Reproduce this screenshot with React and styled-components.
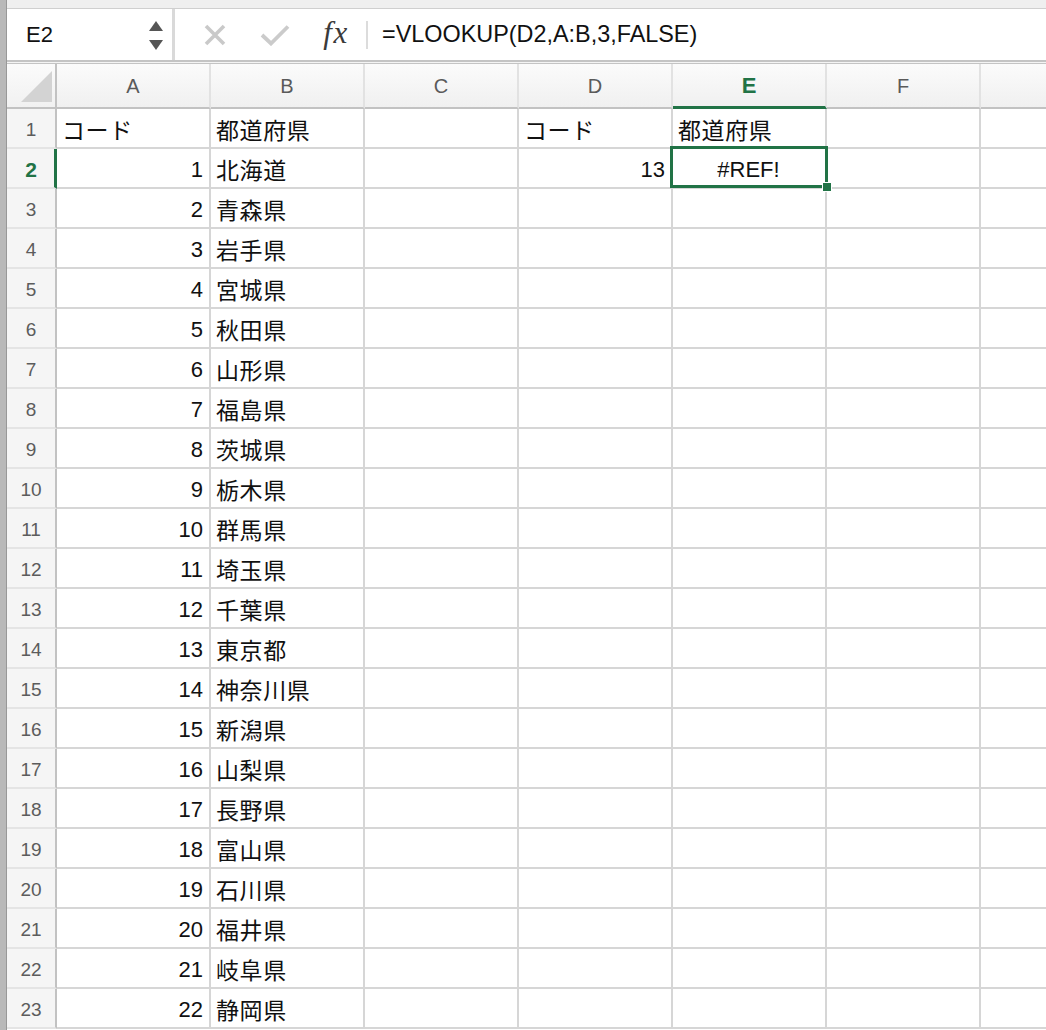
import React from "react";
import styled, { createGlobalStyle } from "styled-components";

const GlobalStyle = createGlobalStyle`
  html, body { margin: 0; padding: 0; background: #ffffff; overflow: hidden; }
  body { width: 1046px; height: 1030px; font-family: "Liberation Sans", "Noto Sans CJK JP", sans-serif; }
  * { box-sizing: border-box; }
`;

const GREEN = "#217346";
const GRID = "#d6d6d6";
const COL_W = 154;
const COLS = ["A", "B", "C", "D", "E", "F", "G"];
const VISIBLE_LABELS = ["A", "B", "C", "D", "E", "F"];

const Window = styled.div`
  display: flex;
  width: 1046px;
  height: 1030px;
  overflow: hidden;
`;

const LeftStrip = styled.div`
  flex: 0 0 7px;
  background: #b9b9b9;
  border-right: 1px solid #989898;
`;

const Main = styled.div`
  flex: 1 1 auto;
  display: flex;
  flex-direction: column;
  min-width: 0;
`;

const TopBand = styled.div`
  flex: 0 0 9px;
  background: #efefef;
  border-bottom: 1px solid #cfcfcf;
`;

const FormulaBar = styled.div`
  flex: 0 0 51px;
  display: flex;
  align-items: stretch;
  background: #ffffff;
`;

const NameBox = styled.div`
  flex: 0 0 168px;
  display: flex;
  align-items: center;
  justify-content: space-between;
  padding: 0 9px 0 19px;
  border-right: 3px solid #d9d9d9;
  font-size: 22px;
  color: #111;
`;

const Spinner = styled.div`
  display: flex;
  flex-direction: column;
  gap: 9px;
  margin-top: 1px;
`;

const Tools = styled.div`
  display: flex;
  align-items: center;
  padding-left: 28px;
`;

const ToolIcon = styled.div`
  width: ${(p) => p.$w}px;
  display: flex;
  align-items: center;
  justify-content: center;
  margin-right: ${(p) => p.$mr || 0}px;
`;

const Fx = styled.span`
  font-family: "Liberation Serif", "DejaVu Serif", serif;
  font-style: italic;
  font-size: 31px;
  color: #3a3a3a;
  letter-spacing: 1.5px;
  margin-top: -3px;
`;

const VDivider = styled.div`
  width: 2px;
  height: 28px;
  background: #dcdcdc;
  margin: 0 14px 0 14px;
`;

const FormulaText = styled.div`
  display: flex;
  align-items: center;
  font-size: 23.4px;
  color: #111;
  margin-top: -1px;
`;

const BarSeparator = styled.div`
  flex: 0 0 4px;
  border-top: 2px solid #c4c4c4;
  border-bottom: 1px solid #c4c4c4;
  background: #f4f4f4;
`;

const Sheet = styled.div`
  display: grid;
  grid-template-columns: 50px repeat(${COLS.length}, ${COL_W}px);
  grid-auto-rows: 40px;
  grid-template-rows: 45px;
`;

const Corner = styled.div`
  background: linear-gradient(#fbfbfb, #f1f1f1);
  border-right: 2px solid #c2c2c2;
  border-bottom: 2px solid #c2c2c2;
  display: flex;
  align-items: flex-end;
  justify-content: flex-end;
  padding: 0 3px 5px 0;
`;

const ColHead = styled.div`
  display: flex;
  align-items: center;
  justify-content: center;
  background: linear-gradient(#fbfbfb, #f0f0f0);
  border-right: 2px solid #e2e2e2;
  border-bottom: ${(p) => (p.$active ? `3px solid ${GREEN}` : "2px solid #c2c2c2")};
  padding-top: 2px;
  color: ${(p) => (p.$active ? GREEN : "#5a5a5a")};
  font-weight: ${(p) => (p.$active ? 700 : 400)};
  font-size: ${(p) => (p.$active ? 22 : 20)}px;
`;

const RowHead = styled.div`
  display: flex;
  align-items: center;
  justify-content: center;
  background: #f5f5f5;
  border-bottom: 2px solid #e4e4e4;
  border-right: ${(p) => (p.$active ? `3px solid ${GREEN}` : "2px solid #c2c2c2")};
  padding: ${(p) => (p.$active ? "3px 0 0 1px" : "3px 0 0 0")};
  font-size: ${(p) => (p.$active ? 21 : 19)}px;
  font-weight: ${(p) => (p.$active ? 700 : 400)};
  color: ${(p) => (p.$active ? GREEN : "#5c5c5c")};
`;

const Cell = styled.div`
  position: relative;
  z-index: ${(p) => (p.$selected ? 2 : "auto")};
  display: flex;
  align-items: center;
  justify-content: ${(p) =>
    p.$align === "right" ? "flex-end" : p.$align === "center" ? "center" : "flex-start"};
  padding: 3px 6px 0 5px;
  border-right: 2px solid ${GRID};
  border-bottom: 2px solid ${GRID};
  font-size: 22px;
  color: #111;
  white-space: nowrap;
`;

const Jp = styled.span`
  font-family: "Noto Sans CJK JP", "Liberation Sans", sans-serif;
  font-size: 23px;
  letter-spacing: 0.6px;
  margin-top: -1px;
`;

const Selection = styled.div`
  position: absolute;
  left: -3px;
  top: -3px;
  right: -3px;
  bottom: -1px;
  border: 3px solid ${GREEN};
  pointer-events: none;
`;

const FillHandle = styled.div`
  position: absolute;
  right: -7px;
  bottom: -7px;
  width: 10px;
  height: 10px;
  background: ${GREEN};
  border: 1px solid #fff;
`;

const prefectures = [
  "北海道", "青森県", "岩手県", "宮城県", "秋田県", "山形県", "福島県", "茨城県",
  "栃木県", "群馬県", "埼玉県", "千葉県", "東京都", "神奈川県", "新潟県", "山梨県",
  "長野県", "富山県", "石川県", "福井県", "岐阜県", "静岡県",
];

function cellContent(row, col) {
  if (row === 1) {
    if (col === "A" || col === "D") return { text: "コード", jp: true };
    if (col === "B" || col === "E") return { text: "都道府県", jp: true };
    return null;
  }
  const i = row - 2;
  if (col === "A") return { text: String(i + 1), align: "right" };
  if (col === "B") return { text: prefectures[i], jp: true };
  if (row === 2 && col === "D") return { text: "13", align: "right" };
  if (row === 2 && col === "E") return { text: "#REF!", align: "center", selected: true };
  return null;
}

const Triangle = () => (
  <svg width="31" height="31" viewBox="0 0 31 31">
    <polygon points="31,0 31,31 0,31" fill="#d3d3d3" />
  </svg>
);

export default function App() {
  const rows = Array.from({ length: 23 }, (_, i) => i + 1);
  return (
    <>
      <GlobalStyle />
      <Window>
        <LeftStrip />
        <Main>
          <TopBand />
          <FormulaBar>
            <NameBox>
              <span>E2</span>
              <Spinner>
                <svg width="14" height="10" viewBox="0 0 14 10">
                  <polygon points="7,0 14,10 0,10" fill="#555" />
                </svg>
                <svg width="14" height="10" viewBox="0 0 14 10">
                  <polygon points="0,0 14,0 7,10" fill="#555" />
                </svg>
              </Spinner>
            </NameBox>
            <Tools>
              <ToolIcon $w={24} $mr={33}>
                <svg width="22" height="22" viewBox="0 0 22 22">
                  <path d="M2 2 L20 20 M20 2 L2 20" stroke="#c9c9c9" strokeWidth="3.6" strokeLinecap="butt" />
                </svg>
              </ToolIcon>
              <ToolIcon $w={30} $mr={30}>
                <svg width="30" height="22" viewBox="0 0 30 22">
                  <path d="M2 11 L11 19.5 L28 2.5" stroke="#cbcbcb" strokeWidth="3.8" fill="none" />
                </svg>
              </ToolIcon>
              <ToolIcon $w={32}>
                <Fx>fx</Fx>
              </ToolIcon>
              <VDivider />
            </Tools>
            <FormulaText>=VLOOKUP(D2,A:B,3,FALSE)</FormulaText>
          </FormulaBar>
          <BarSeparator />
          <Sheet>
            <Corner>
              <Triangle />
            </Corner>
            {COLS.map((c) => (
              <ColHead key={c} $active={c === "E"}>
                {VISIBLE_LABELS.includes(c) ? c : ""}
              </ColHead>
            ))}
            {rows.map((r) => (
              <React.Fragment key={r}>
                <RowHead $active={r === 2}>{r}</RowHead>
                {COLS.map((c) => {
                  const content = cellContent(r, c);
                  return (
                    <Cell key={c} $align={content?.align} $selected={content?.selected}>
                      {content ? (content.jp ? <Jp>{content.text}</Jp> : content.text) : null}
                      {content?.selected && (
                        <Selection>
                          <FillHandle />
                        </Selection>
                      )}
                    </Cell>
                  );
                })}
              </React.Fragment>
            ))}
          </Sheet>
        </Main>
      </Window>
    </>
  );
}
